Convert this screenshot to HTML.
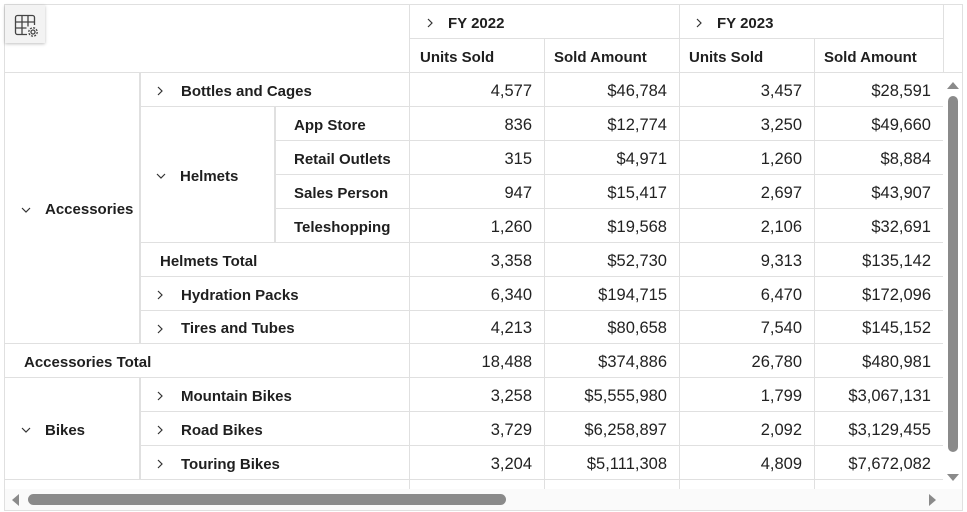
<!DOCTYPE html>
<html><head><meta charset="utf-8"><style>
*{box-sizing:border-box;margin:0;padding:0}
body{width:967px;height:512px;background:#fff;font-family:"Liberation Sans",sans-serif;color:#212121;position:relative;overflow:hidden}
.c{position:absolute;border-right:1px solid #e0e0e0;border-bottom:1px solid #e0e0e0;display:flex;align-items:center;white-space:nowrap;overflow:hidden;padding-top:3px}
.h{font-weight:bold;font-size:15px;color:#1f1f1f}
svg.ic{margin-right:17px}
</style></head><body>
<div style="position:absolute;left:4px;top:4px;width:959px;height:507px;border:1px solid #e0e0e0"></div>
<!-- settings icon -->
<div style="position:absolute;left:5px;top:5px;width:40px;height:38px;background:#f3f3f3;box-shadow:0 1px 3px rgba(0,0,0,.25)">
<svg width="40" height="38" viewBox="0 0 40 38"><g fill="none" stroke="#444" stroke-width="1.3"><path d="M29.5 20V12.5a2 2 0 0 0-2-2h-15a2 2 0 0 0-2 2v15a2 2 0 0 0 2 2H22"/><path d="M10.5 17h19M10.5 23h11M17 10.5v19M23 10.5v11"/><circle cx="28" cy="27" r="2"/><circle cx="28" cy="27" r="4.2" stroke-dasharray="2 1.3"/></g></svg></div>
<!-- column header -->
<div class="c h" style="left:409px;top:5px;width:271px;height:34px;padding-left:16px;border-left:1px solid #e0e0e0"><svg class="ic" width="8" height="10" style="margin-right:14px"><path d="M2 1l4 4-4 4" fill="none" stroke="#333" stroke-width="1.2"/></svg>FY 2022</div>
<div class="c h" style="left:679px;top:5px;width:265px;height:34px;padding-left:16px"><svg class="ic" width="8" height="10" style="margin-right:14px"><path d="M2 1l4 4-4 4" fill="none" stroke="#333" stroke-width="1.2"/></svg>FY 2023</div>
<div class="c h" style="left:409px;top:39px;width:136px;height:34px;padding-left:10px;border-left:1px solid #e0e0e0">Units Sold</div>
<div class="c h" style="left:544px;top:39px;width:136px;height:34px;padding-left:10px">Sold Amount</div>
<div class="c h" style="left:679px;top:39px;width:136px;height:34px;padding-left:10px">Units Sold</div>
<div class="c h" style="left:814px;top:39px;width:130px;height:34px;padding-left:10px">Sold Amount</div>
<div style="position:absolute;left:5px;top:72px;width:957px;border-top:1px solid #e0e0e0"></div>
<div style="position:absolute;left:943px;top:5px;height:68px;border-left:1px solid #e0e0e0"></div>

<!-- row headers -->
<div class="c h" style="left:5px;top:73px;width:136px;height:271px;padding-left:16px;border-right:2px solid #e0e0e0"><svg class="ic" width="10" height="8" style="margin-right:14px"><path d="M1 2l4 4 4-4" fill="none" stroke="#333" stroke-width="1.2"/></svg>Accessories</div>
<div class="c h" style="left:141px;top:73px;width:269px;height:34px;padding-left:15px"><svg class="ic" width="8" height="10"><path d="M2 1l4 4-4 4" fill="none" stroke="#333" stroke-width="1.2"/></svg>Bottles and Cages</div>
<div class="c h" style="left:141px;top:107px;width:135px;height:136px;padding-left:15px;border-right:2px solid #e0e0e0"><svg class="ic" width="10" height="8" style="margin-right:14px"><path d="M1 2l4 4 4-4" fill="none" stroke="#333" stroke-width="1.2"/></svg>Helmets</div>
<div class="c h" style="left:276px;top:107px;width:134px;height:34px;padding-left:18px">App Store</div>
<div class="c h" style="left:276px;top:141px;width:134px;height:34px;padding-left:18px">Retail Outlets</div>
<div class="c h" style="left:276px;top:175px;width:134px;height:34px;padding-left:18px">Sales Person</div>
<div class="c h" style="left:276px;top:209px;width:134px;height:34px;padding-left:18px">Teleshopping</div>
<div class="c h" style="left:141px;top:243px;width:269px;height:34px;padding-left:19px">Helmets Total</div>
<div class="c h" style="left:141px;top:277px;width:269px;height:34px;padding-left:15px"><svg class="ic" width="8" height="10"><path d="M2 1l4 4-4 4" fill="none" stroke="#333" stroke-width="1.2"/></svg>Hydration Packs</div>
<div class="c h" style="left:141px;top:311px;width:269px;height:33px;padding-left:15px"><svg class="ic" width="8" height="10"><path d="M2 1l4 4-4 4" fill="none" stroke="#333" stroke-width="1.2"/></svg>Tires and Tubes</div>
<div class="c h" style="left:5px;top:344px;width:405px;height:34px;padding-left:19px">Accessories Total</div>
<div class="c h" style="left:5px;top:378px;width:136px;height:102px;padding-left:16px;border-right:2px solid #e0e0e0"><svg class="ic" width="10" height="8" style="margin-right:14px"><path d="M1 2l4 4 4-4" fill="none" stroke="#333" stroke-width="1.2"/></svg>Bikes</div>
<div class="c h" style="left:141px;top:378px;width:269px;height:34px;padding-left:15px"><svg class="ic" width="8" height="10"><path d="M2 1l4 4-4 4" fill="none" stroke="#333" stroke-width="1.2"/></svg>Mountain Bikes</div>
<div class="c h" style="left:141px;top:412px;width:269px;height:34px;padding-left:15px"><svg class="ic" width="8" height="10"><path d="M2 1l4 4-4 4" fill="none" stroke="#333" stroke-width="1.2"/></svg>Road Bikes</div>
<div class="c h" style="left:141px;top:446px;width:269px;height:34px;padding-left:15px"><svg class="ic" width="8" height="10"><path d="M2 1l4 4-4 4" fill="none" stroke="#333" stroke-width="1.2"/></svg>Touring Bikes</div>
<div class="c" style="left:5px;top:480px;width:405px;height:20px;border-bottom:none"></div>
<div style="position:absolute;left:409px;top:73px;height:417px;border-left:1px solid #e0e0e0"></div>

<!-- values -->
<div style="position:absolute;left:410px;top:73px">
<style>.r{position:relative;height:34px;display:flex}.r>div{width:135px;height:100%;border-right:1px solid #e0e0e0;border-bottom:1px solid #e0e0e0;display:flex;align-items:center;justify-content:flex-end;padding-right:12px;padding-top:3px;font-size:16.5px;color:#222}.r>div:last-child{width:129px}</style>
<div class="r"><div>4,577</div><div>$46,784</div><div>3,457</div><div>$28,591</div></div>
<div class="r"><div>836</div><div>$12,774</div><div>3,250</div><div>$49,660</div></div>
<div class="r"><div>315</div><div>$4,971</div><div>1,260</div><div>$8,884</div></div>
<div class="r"><div>947</div><div>$15,417</div><div>2,697</div><div>$43,907</div></div>
<div class="r"><div>1,260</div><div>$19,568</div><div>2,106</div><div>$32,691</div></div>
<div class="r"><div>3,358</div><div>$52,730</div><div>9,313</div><div>$135,142</div></div>
<div class="r"><div>6,340</div><div>$194,715</div><div>6,470</div><div>$172,096</div></div>
<div class="r" style="height:33px"><div>4,213</div><div>$80,658</div><div>7,540</div><div>$145,152</div></div>
<div class="r"><div>18,488</div><div>$374,886</div><div>26,780</div><div>$480,981</div></div>
<div class="r"><div>3,258</div><div>$5,555,980</div><div>1,799</div><div>$3,067,131</div></div>
<div class="r"><div>3,729</div><div>$6,258,897</div><div>2,092</div><div>$3,129,455</div></div>
<div class="r"><div>3,204</div><div>$5,111,308</div><div>4,809</div><div>$7,672,082</div></div>
<div class="r" style="height:10px"><div style="border-bottom:none"></div><div style="border-bottom:none"></div><div style="border-bottom:none"></div><div style="border-bottom:none"></div></div>
</div>

<!-- vertical scrollbar -->
<div style="position:absolute;left:943px;top:73px;width:19px;height:416px;background:#fff"></div>
<svg style="position:absolute;left:946px;top:80px" width="14" height="10"><path d="M1 9l6-7 6 7z" fill="#8a8a8a"/></svg>
<div style="position:absolute;left:948px;top:96px;width:10px;height:356px;background:#8a8a8a;border-radius:5px"></div>
<svg style="position:absolute;left:946px;top:473px" width="14" height="10"><path d="M1 1h12l-6 7z" fill="#8a8a8a"/></svg>
<!-- horizontal scrollbar -->
<div style="position:absolute;left:5px;top:489px;width:957px;height:21px;background:#fafafa"></div>
<svg style="position:absolute;left:10px;top:493px" width="10" height="14"><path d="M9 1v12L2 7z" fill="#8a8a8a"/></svg>
<div style="position:absolute;left:28px;top:494px;width:478px;height:11px;background:#8a8a8a;border-radius:6px"></div>
<svg style="position:absolute;left:928px;top:493px" width="10" height="14"><path d="M1 1v12l7-6z" fill="#8a8a8a"/></svg>
</body></html>
